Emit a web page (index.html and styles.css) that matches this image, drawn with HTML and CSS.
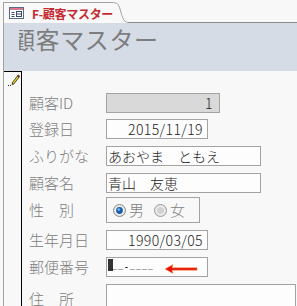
FILE: index.html
```html
<!DOCTYPE html>
<html lang="ja">
<head>
<meta charset="utf-8">
<title>F-顧客マスター</title>
<link rel="stylesheet" href="styles.css">
</head>
<body>
<div class="tabbar">
  <div class="tab">
    <svg class="tab-icon" width="15" height="12" viewBox="0 0 15 12">
      <rect x="0.5" y="0.5" width="14" height="11" fill="#ffffff" stroke="#5a6a8a"/>
      <rect x="1" y="1" width="13" height="2" fill="#d9788f"/>
      <path d="M2.5 5.5h3M2.5 7.5h3M2.5 9.5h3" stroke="#3a4a6a" stroke-width="1"/>
      <rect x="7.5" y="4.5" width="5" height="5" fill="none" stroke="#3a4a6a"/>
      <path d="M7.5 7h5" stroke="#3a4a6a"/>
    </svg>
    <span class="tab-title">F-顧客マスター</span>
  </div>
  <svg class="tab-curve" width="16" height="21" viewBox="0 0 16 21">
    <path d="M0 0.5 C5 0.5 6.5 2 8 7 S11 20.5 16 20.5" fill="none" stroke="#a2a2a2"/>
  </svg>
  <div class="tab-fill"></div>
</div>
<div class="form">
  <div class="header">
    <div class="title-clip"><span class="title">顧客マスター</span></div>
  </div>
  <div class="detail">
    <div class="selector">
      <svg class="pencil" width="12" height="13" viewBox="0 0 12 13">
        <path d="M4 9 L9.5 2 L11 3.3 L5.5 10.3 Z" fill="#f4d20c" stroke="#222" stroke-width="0.8"/>
        <path d="M9.5 2 L10.3 1 L11.8 2.3 L11 3.3 Z" fill="#e0303a" stroke="#222" stroke-width="0.8"/>
        <path d="M4 9 L3.6 11 L5.5 10.3 Z" fill="#222"/>
        <rect x="0" y="11" width="1" height="1" fill="#222"/>
        <rect x="2" y="11" width="1" height="1" fill="#222"/>
      </svg>
    </div>
    <div class="fields">
      <div class="row row-id">
        <span class="label">顧客ID</span>
        <div class="box box-id num">1</div>
      </div>
      <div class="row">
        <span class="label">登録日</span>
        <div class="box box-date num">2015/11/19</div>
      </div>
      <div class="row">
        <span class="label">ふりがな</span>
        <div class="box box-wide">あおやま　ともえ</div>
      </div>
      <div class="row row-before-opt">
        <span class="label">顧客名</span>
        <div class="box box-wide">青山　友恵</div>
      </div>
      <div class="row">
        <span class="label">性　別</span>
        <div class="optgroup">
          <span class="opt">
            <svg class="radio" width="13" height="13" viewBox="0 0 13 13">
              <circle cx="6.5" cy="6.5" r="6" fill="#e4e4e4" stroke="#8a8a8a"/>
              <circle cx="6.5" cy="6.5" r="4.6" fill="#f4f4f4"/>
              <circle cx="6.5" cy="6.5" r="3.4" fill="#1c5ea8"/>
              <circle cx="5.8" cy="5.6" r="1.4" fill="#6fb2ea"/>
            </svg>
            <span class="opt-text">男</span>
          </span>
          <span class="opt">
            <svg class="radio" width="13" height="13" viewBox="0 0 13 13">
              <circle cx="6.5" cy="6.5" r="6" fill="#e4e4e4" stroke="#9a9a9a"/>
              <circle cx="6.5" cy="6.5" r="4.6" fill="#f0f0f0"/>
              <circle cx="6.5" cy="6.5" r="3.6" fill="#d2d2d2"/>
            </svg>
            <span class="opt-text">女</span>
          </span>
        </div>
      </div>
      <div class="row">
        <span class="label">生年月日</span>
        <div class="box box-date num">1990/03/05</div>
      </div>
      <div class="row">
        <span class="label">郵便番号</span>
        <div class="box box-date zip">
          <span class="caret"></span><span class="mask">__-____</span>
          <svg class="arrow" width="34" height="12" viewBox="0 0 34 12">
            <path d="M1 6 L9 1.5 L8 4.8 L33 4.8 L33 7.2 L8 7.2 L9 10.5 Z" fill="#e80c0c" stroke="#f29a2e" stroke-width="0.5"/>
          </svg>
        </div>
      </div>
      <div class="row">
        <span class="label">住　所</span>
        <div class="box box-addr"></div>
      </div>
    </div>
  </div>
</div>
</body>
</html>
```

FILE: styles.css
```css
* {
  box-sizing: border-box;
}

html,
body {
  margin: 0;
  padding: 0;
}

body {
  width: 297px;
  height: 306px;
  overflow: hidden;
  background: #f8f8f8;
  font-family: "Noto Sans CJK JP", "Noto Sans", sans-serif;
}

/* ---------- tab bar ---------- */
.tabbar {
  display: flex;
  align-items: flex-end;
  height: 23px;
  padding-left: 3px;
  padding-top: 2px;
}

.tab {
  display: flex;
  align-items: center;
  width: 109px;
  height: 21px;
  border-left: 1px solid #a2a2a2;
  border-top: 1px solid #a2a2a2;
  background: #f9f9f9;
  padding-left: 5px;
  flex: none;
}

.tab-icon {
  display: block;
  flex: none;
  margin-top: -1px;
}

.tab-title {
  flex: none;
  margin-left: 8px;
  font-size: 12px;
  font-weight: bold;
  color: #c42a31;
  line-height: 15px;
  white-space: nowrap;
  letter-spacing: -0.3px;
}

.tab-curve {
  display: block;
  flex: none;
}

.tab-fill {
  flex: 1;
  height: 21px;
  border-bottom: 1px solid #8c8c8c;
}

/* ---------- form ---------- */
.form {
  margin-left: 3px;
  border-left: 1px solid #a2a2a2;
}

.header {
  height: 48px;
  background: #d6dce5;
  padding-left: 15px;
  padding-top: 2px;
}

.title-clip {
  overflow: hidden;
  white-space: nowrap;
}

.title {
  display: block;
  margin-left: -8px;
  font-size: 24px;
  line-height: 28px;
  color: #7d7d7d;
  letter-spacing: 0.6px;
}

.detail {
  display: flex;
  height: 235px;
}

.selector {
  width: 18px;
  flex: none;
  border-top: 1px solid #000;
  border-right: 1px solid #000;
  padding: 2px 0 0 4px;
}

.pencil {
  display: block;
}

.fields {
  flex: 1;
  padding-left: 7px;
  padding-top: 22px;
  display: flex;
  flex-direction: column;
}

.row {
  display: flex;
  align-items: center;
  margin-bottom: 7px;
  flex: none;
}

.row-id {
  margin-bottom: 6px;
}

.row-before-opt {
  margin-bottom: 4px;
}

.label {
  width: 77px;
  flex: none;
  font-size: 15px;
  font-weight: 300;
  color: #808080;
  line-height: 18px;
  white-space: nowrap;
}

.box {
  height: 20px;
  border: 1px solid #a3a3a3;
  background: #fdfdfd;
  font-size: 14px;
  font-weight: 300;
  line-height: 18px;
  color: #222;
  white-space: nowrap;
  padding: 0 1px;
}

.num {
  text-align: right;
  padding-right: 4px;
  letter-spacing: 0.4px;
}

.box-id {
  width: 114px;
  background: #d9d9d9;
  padding-right: 6px;
}

.box-date {
  width: 102px;
}

.box-wide {
  width: 155px;
}

.box-addr {
  width: 190px;
  height: 30px;
}

.optgroup {
  display: flex;
  align-items: center;
  width: 94px;
  height: 26px;
  border: 1px solid #a3a3a3;
  padding-left: 6px;
  gap: 10px;
}

.opt {
  display: flex;
  align-items: center;
  gap: 3px;
}

.radio {
  display: block;
}

.opt-text {
  font-size: 15px;
  font-weight: 300;
  line-height: 18px;
  color: #808080;
}

/* ---------- zip field with annotation arrow ---------- */
.zip {
  position: relative;
  display: flex;
  align-items: flex-start;
  padding-left: 1px;
  padding-top: 1px;
}

.caret {
  display: block;
  flex: none;
  width: 5px;
  height: 12px;
  background: #333;
}

.mask {
  display: block;
  font-family: "Liberation Mono", "DejaVu Sans Mono", monospace;
  font-size: 8px;
  font-weight: bold;
  line-height: 10px;
  height: 14px;
  padding-top: 3px;
  color: #000;
  letter-spacing: 1.2px;
  margin-left: -1px;
}

.arrow {
  position: absolute;
  left: 57px;
  top: 5px;
}
```
